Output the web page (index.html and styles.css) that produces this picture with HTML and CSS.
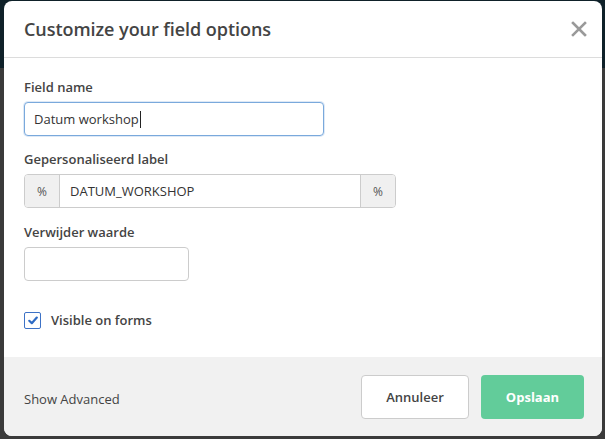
FILE: index.html
```html
<!DOCTYPE html>
<html>
<head>
<meta charset="utf-8">
<link rel="stylesheet" href="styles.css">
</head>
<body>
<div class="modal">
  <div class="modal-header">
    <h2 class="modal-title">Customize your field options</h2>
    <svg class="close" width="16" height="16" viewBox="0 0 16 16"><path d="M2 2 L14 14 M14 2 L2 14" stroke="#9a9a9a" stroke-width="2.6" stroke-linecap="square"/></svg>
  </div>
  <div class="modal-body">
    <label class="field-label">Field name</label>
    <div class="input input-focus input-name"><span>Datum workshop</span><span class="caret"></span></div>
    <label class="field-label">Gepersonaliseerd label</label>
    <div class="input-group">
      <span class="addon addon-left">%</span>
      <span class="group-value">DATUM_WORKSHOP</span>
      <span class="addon addon-right">%</span>
    </div>
    <label class="field-label">Verwijder waarde</label>
    <div class="input input-small"></div>
    <div class="check-row">
      <span class="checkbox"><svg width="10" height="9" viewBox="0 0 10 9"><path d="M1.3 4.8 L3.8 7.2 L8.8 1.6" fill="none" stroke="#2f6bc4" stroke-width="2.2" stroke-linecap="round" stroke-linejoin="round"/></svg></span>
      <span class="check-label">Visible on forms</span>
    </div>
  </div>
  <div class="modal-footer">
    <span class="advanced">Show Advanced</span>
    <div class="buttons">
      <button class="btn btn-cancel">Annuleer</button>
      <button class="btn btn-save">Opslaan</button>
    </div>
  </div>
</div>
</body>
</html>
```

FILE: styles.css
```css
html, body {
  margin: 0;
  padding: 0;
}
body {
  width: 605px;
  height: 439px;
  overflow: hidden;
  background: linear-gradient(to bottom, #0f2129 0, #0f2129 68px, #3a3a3a 68px, #3a3a3a 100%);
  font-family: "Open Sans", sans-serif;
  color: #444;
  padding: 1px 3px 0 4px;
  box-sizing: border-box;
}
.modal {
  width: 598px;
  height: 435px;
  background: #fff;
  border-radius: 8px;
  overflow: hidden;
  display: flex;
  flex-direction: column;
}
.modal-header {
  height: 56px;
  border-bottom: 1px solid #dcdcdc;
  display: flex;
  align-items: center;
  justify-content: space-between;
  padding: 0 15px 0 20px;
  flex-shrink: 0;
}
.modal-title {
  margin: 0;
  font-size: 18px;
  font-weight: 600;
  color: #444;
  letter-spacing: -0.05px;
}
.close {
  display: block;
}
.modal-body {
  padding: 20px 20px 0 20px;
  flex: 1;
}
.field-label {
  display: block;
  font-size: 13px;
  font-weight: 600;
  line-height: 18px;
  color: #444;
  margin-bottom: 6px;
}
.input {
  box-sizing: border-box;
  height: 34px;
  border: 1px solid #ccc;
  border-radius: 4px;
  background: #fff;
  margin-bottom: 14px;
  display: flex;
  align-items: center;
  padding: 0 9px;
  font-size: 13px;
  color: #333;
}
.input-focus {
  border-color: #7aa9dc;
  box-shadow: 0 0 0 1px rgba(122, 169, 220, 0.25);
}
.input-name {
  width: 300px;
}
.caret {
  display: inline-block;
  width: 1px;
  height: 17px;
  background: #222;
  margin-left: 1px;
}
.input-small {
  width: 165px;
  margin-bottom: 30px;
}
.input-group {
  box-sizing: border-box;
  width: 372px;
  height: 34px;
  border: 1px solid #ccc;
  border-radius: 4px;
  display: flex;
  margin-bottom: 15px;
  overflow: hidden;
  font-size: 13px;
  color: #333;
}
.addon {
  width: 34px;
  background: #f0f0f0;
  display: flex;
  align-items: center;
  justify-content: center;
  color: #555;
  font-size: 12px;
}
.addon-left {
  border-right: 1px solid #ccc;
}
.addon-right {
  border-left: 1px solid #ccc;
}
.group-value {
  flex: 1;
  display: flex;
  align-items: center;
  padding-left: 10px;
}
.check-row {
  display: flex;
  align-items: center;
}
.checkbox {
  box-sizing: border-box;
  width: 17px;
  height: 17px;
  border: 1.5px solid #3d72c6;
  border-radius: 2px;
  display: flex;
  align-items: center;
  justify-content: center;
  margin-right: 10px;
}
.checkbox svg {
  display: block;
}
.check-label {
  font-size: 13px;
  font-weight: 600;
  color: #444;
}
.modal-footer {
  height: 79px;
  background: #f1f1f1;
  display: flex;
  align-items: center;
  justify-content: space-between;
  padding: 0 18px 0 20px;
  box-sizing: border-box;
  flex-shrink: 0;
}
.advanced {
  font-size: 13px;
  color: #444;
  margin-top: 4px;
}
.buttons {
  display: flex;
  gap: 12px;
}
.btn {
  height: 44px;
  border-radius: 4px;
  font-family: "Open Sans", sans-serif;
  font-size: 13px;
  font-weight: 600;
  padding: 0;
  cursor: pointer;
}
.btn-cancel {
  width: 108px;
  background: #fff;
  border: 1px solid #ccc;
  color: #444;
}
.btn-save {
  width: 103px;
  background: #62cc9a;
  border: none;
  color: #fff;
  font-weight: 700;
}
```
